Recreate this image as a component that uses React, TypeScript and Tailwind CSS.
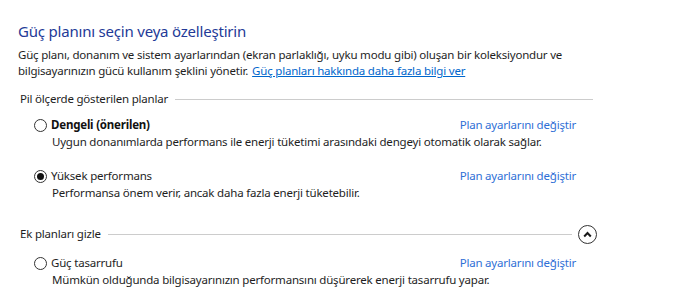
import React from "react";

type Plan = {
  name: string;
  desc: string;
  selected?: boolean;
  bold?: boolean;
};

const Radio = ({ checked }: { checked?: boolean }) => (
  <span className="flex h-[13px] w-[13px] shrink-0 items-center justify-center rounded-full border border-[#333333] bg-white">
    {checked && <span className="h-[7px] w-[7px] rounded-full bg-[#111111]" />}
  </span>
);

const SectionHeader = ({ title, toggle }: { title: string; toggle?: boolean }) => (
  <div className="flex h-[20px] items-center pl-[2px]">
    <span className="text-[11.5px] leading-4 tracking-[-0.2px] text-[#1e1e1e]">{title}</span>
    <div className={toggle ? "ml-[7px] mr-[6px] h-px flex-1 bg-[#cccccc]" : "ml-[7px] h-px flex-1 bg-[#cccccc]"} />
    {toggle && (
      <span className="mr-[-4px] flex h-[19px] w-[19px] items-center justify-center rounded-full border-[1.5px] border-[#333333]">
        <svg width="9" height="7" viewBox="0 0 9 7">
          <path d="M1.2 5.5 L4.5 2 L7.8 5.5" fill="none" stroke="#1a1a1a" strokeWidth="2" />
        </svg>
      </span>
    )}
  </div>
);

const PlanRow = ({ plan }: { plan: Plan }) => (
  <div>
    <div className="flex h-[18px] items-center justify-between pl-[16px] pr-[17px]">
      <label className="flex items-center gap-[4px]">
        <Radio checked={plan.selected} />
        <span
          className={
            plan.bold
              ? "text-[11.5px] font-bold tracking-[-0.2px] text-[#111111]"
              : "text-[11.5px] tracking-[-0.2px] text-[#1e1e1e]"
          }
        >
          {plan.name}
        </span>
      </label>
      <a className="text-[11.5px] tracking-[-0.2px] text-[#2f6fd6]">Plan ayarlarını değiştir</a>
    </div>
    <p className="pl-[34px] text-[11.5px] leading-4 tracking-[-0.2px] text-[#1e1e1e]">{plan.desc}</p>
  </div>
);

export default function App() {
  return (
    <div className="h-[302px] w-[676px] overflow-hidden bg-white font-['Noto_Sans',sans-serif]">
      <div className="w-[593px] pl-[18px] pt-[20px]">
        <h1 className="text-[15px] leading-[22px] font-normal tracking-[-0.2px] text-[#233a97]">
          Güç planını seçin veya özelleştirin
        </h1>
        <div className="mt-[5px] text-[11.5px] leading-4 tracking-[-0.2px] text-[#1e1e1e]">
          <p>
            Güç planı, donanım ve sistem ayarlarından (ekran parlaklığı, uyku modu gibi) oluşan bir koleksiyondur ve
          </p>
          <div className="flex gap-[4px]">
            <span>bilgisayarınızın gücü kullanım şeklini yönetir.</span>
            <a className="text-[#0066cc] underline">Güç planları hakkında daha fazla bilgi ver</a>
          </div>
        </div>

        <div className="mt-[10px]">
          <SectionHeader title="Pil ölçerde gösterilen planlar" />
        </div>
        <div className="mt-[7px]">
          <PlanRow
            plan={{
              name: "Dengeli (önerilen)",
              bold: true,
              desc: "Uygun donanımlarda performans ile enerji tüketimi arasındaki dengeyi otomatik olarak sağlar.",
            }}
          />
        </div>
        <div className="mt-[17px]">
          <PlanRow
            plan={{
              name: "Yüksek performans",
              selected: true,
              desc: "Performansa önem verir, ancak daha fazla enerji tüketebilir.",
            }}
          />
        </div>

        <div className="mt-[23px]">
          <SectionHeader title="Ek planları gizle" toggle />
        </div>
        <div className="mt-[10px]">
          <PlanRow
            plan={{
              name: "Güç tasarrufu",
              desc: "Mümkün olduğunda bilgisayarınızın performansını düşürerek enerji tasarrufu yapar.",
            }}
          />
        </div>
      </div>
    </div>
  );
}
